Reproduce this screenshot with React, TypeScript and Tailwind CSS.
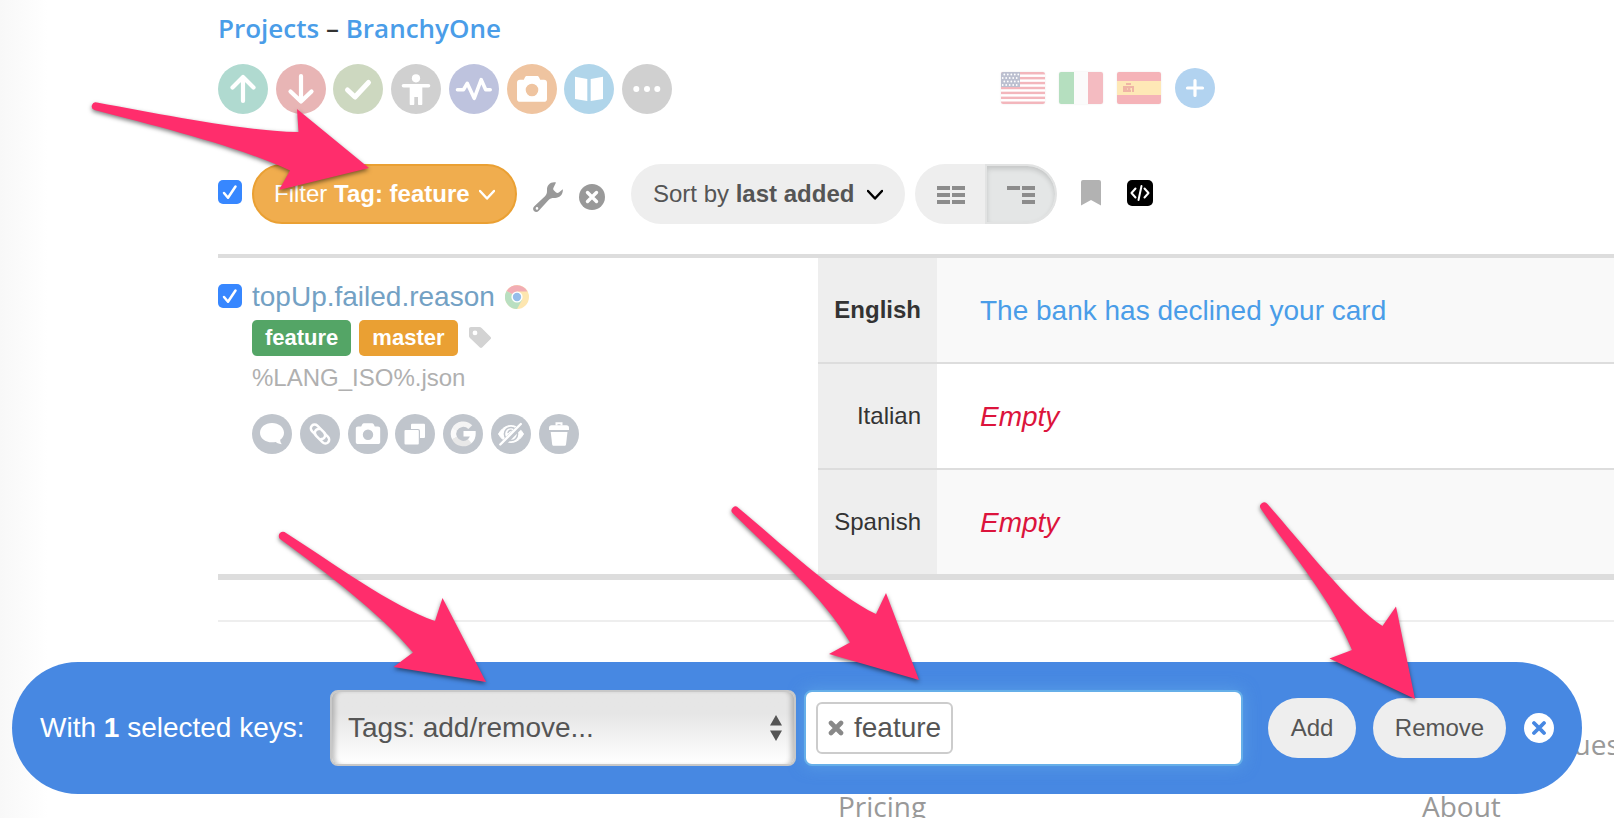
import type { ReactNode } from 'react';

const projectActions = [
  {
    label: 'Upload',
    bg: 'bg-[#b0dad0]',
    icon: <path d="M25 37V13M14.500 23.500 25 13l10.500 10.500" {...line(4.2)} />,
  },
  {
    label: 'Download',
    bg: 'bg-[#e8b5b5]',
    icon: <path d="M25 12v25M14.500 27.500 25 37.500l10.500-10" {...line(4.2)} />,
  },
  {
    label: 'Tasks',
    bg: 'bg-[#cdd8c0]',
    icon: <path d="m14.500 26 7.500 7 13.500-14.500" {...line(5)} />,
  },
  {
    label: 'Contributors',
    bg: 'bg-[#d0d0d0]',
    icon: (
      <>
        <circle cx="25" cy="14.300" r="4.100" fill="#fff" />
        <path d="M12.500 21.700h25" {...line(3.6)} />
        <path d="M18.700 20h12.600v20c0 .6-.4 1-1 1h-2.300c-.6 0-1-.4-1-1v-7h-3.700v7c0 .6-.4 1-1 1h-2.600c-.6 0-1-.4-1-1z" fill="#fff" />
      </>
    ),
  },
  {
    label: 'Activity',
    bg: 'bg-[#bec3de]',
    icon: <path d="M8.500 25.700h6l3.700-6.400 7 15 7-18.600 4.500 10h4.500" {...line(3.6)} />,
  },
  {
    label: 'Screenshots',
    bg: 'bg-[#efc4a0]',
    icon: (
      <path
        fillRule="evenodd"
        fill="#fff"
        d="M20 12h10c1 0 1.600.400 2 1.200l1.200 2.600H37c1.900 0 3 1.100 3 3V35c0 1.900-1.100 2.800-3 2.800H13c-1.900 0-3-.9-3-2.800V18.800c0-1.900 1.100-3 3-3h3.800l1.200-2.600c.4-.8 1-1.200 2-1.200zm5 7.700a6.300 6.300 0 1 0 0 12.600 6.300 6.300 0 0 0 0-12.600z"
      />
    ),
  },
  {
    label: 'Glossary',
    bg: 'bg-[#b0d5ea]',
    icon: <path d="m11 12.700 12.300 2.300v22L11 35zM39 12.700 26.700 15v22L39 35z" fill="#fff" />,
  },
  {
    label: 'More',
    bg: 'bg-[#d0d0d0]',
    icon: (
      <g fill="#fff">
        <circle cx="14.300" cy="25" r="3" />
        <circle cx="25" cy="25" r="3" />
        <circle cx="35.300" cy="25" r="3" />
      </g>
    ),
  },
];

const keyActions = [
  {
    label: 'Comments',
    icon: <path d="M20 9c6.900 0 12 4.300 12 9.700 0 3-1.500 5.400-3.800 7 0 1.800.5 3.300 1.700 4.500-2.200-.2-4.500-1-6.100-2.300-1.200.3-2.500.4-3.800.4-6.900 0-12-4.200-12-9.600S13.100 9 20 9z" fill="#fff" />,
  },
  {
    label: 'Attach',
    icon: (
      <g transform="rotate(45 20 20)" fill="none" stroke="#fff" strokeWidth="2.500" strokeLinecap="round">
        <path d="M17 23.600h-4.800a3.800 3.800 0 0 1 0-7.600h9.600a3.800 3.800 0 0 1 2.500 6.600" />
        <path d="M23 16.400h4.800a3.800 3.800 0 0 1 0 7.600h-9.600a3.800 3.800 0 0 1-2.500-6.600" />
      </g>
    ),
  },
  {
    label: 'Add screenshot',
    icon: (
      <path
        fillRule="evenodd"
        fill="#fff"
        d="M16 9.300h8c.8 0 1.300.3 1.700 1l1.100 2.200H30c1.400 0 2.200.8 2.200 2.200v13.200c0 1.400-.8 2.200-2.200 2.200H10c-1.400 0-2.200-.8-2.200-2.200V14.700c0-1.400.8-2.200 2.200-2.200h3.200l1.100-2.200c.4-.7.9-1 1.700-1zm4 6.200a5.200 5.200 0 1 0 0 10.400 5.200 5.200 0 0 0 0-10.400z"
      />
    ),
  },
  {
    label: 'Duplicate',
    icon: (
      <>
        <rect x="16" y="9.700" width="14" height="14.300" rx="1" fill="#fff" />
        <rect x="8.500" y="15" width="16.500" height="16.500" rx="2" fill="#c0c5cc" />
        <rect x="9.500" y="16" width="14.300" height="14.500" rx="1" fill="#fff" />
      </>
    ),
  },
  {
    label: 'Google',
    icon: (
      <g fill="none" strokeWidth="5.400">
        <path d="M27.300 13.200A9.800 9.800 0 0 0 11.500 15.500" stroke="#f4f4f4" />
        <path d="M11.600 15.300a9.800 9.800 0 0 0 0 9" stroke="#fafafa" />
        <path d="M11.500 24a9.800 9.800 0 0 0 15.500 3" stroke="#e8e8e8" />
        <path d="M20.500 19.800h9.500a9.800 9.800 0 0 1-3.200 7.400" stroke="#fff" />
      </g>
    ),
  },
  {
    label: 'Hide',
    icon: (
      <>
        <path d="M7.500 20c3-5.400 7.500-8.500 12.500-8.500s9.500 3.100 12.500 8.500c-3 5.400-7.500 8.500-12.500 8.500S10.500 25.400 7.500 20z" fill="#fff" stroke="#fff" strokeLinejoin="round" />
        <circle cx="20" cy="20" r="6.600" fill="none" stroke="#c0c5cc" strokeWidth="1.500" />
        <path d="M17 18.500c.6-1.500 1.800-2.200 3.200-2.200" fill="none" stroke="#c0c5cc" strokeWidth="1.400" strokeLinecap="round" />
        <path d="M31 10.500 10.800 31.200" stroke="#c0c5cc" strokeWidth="5.500" />
        <path d="M29.800 10 9.300 30.500" {...line(2.4)} />
      </>
    ),
  },
  {
    label: 'Delete',
    icon: (
      <>
        <path d="M17.500 11.500V9.300h5v2.200" fill="none" stroke="#fff" strokeWidth="2" />
        <path d="M12.500 11.300h15c1.500 0 2.500 1 2.500 2.500V16H10v-2.200c0-1.500 1-2.500 2.500-2.500z" fill="#fff" />
        <path d="M11.700 18h16.800L27 30.500c-.1.800-.7 1.300-1.500 1.300h-10.800c-.8 0-1.400-.5-1.500-1.300z" fill="#fff" />
      </>
    ),
  },
];

const translations = [
  { language: 'English', base: true, text: 'The bank has declined your card' },
  { language: 'Italian', base: false, text: null },
  { language: 'Spanish', base: false, text: null },
];

function line(width: number) {
  return {
    fill: 'none',
    stroke: '#fff',
    strokeWidth: width,
    strokeLinecap: 'round' as const,
    strokeLinejoin: 'round' as const,
  };
}

function Checkbox({ label }: { label: string }) {
  return (
    <label className="relative block size-6 shrink-0">
      <input
        type="checkbox"
        defaultChecked
        aria-label={label}
        className="peer block size-6 appearance-none rounded-[5px] border border-gray-400 bg-white checked:border-0 checked:bg-[#3787ff]"
      />
      <svg viewBox="0 0 24 24" className="pointer-events-none absolute inset-0 hidden size-6 peer-checked:block">
        <path d="m6 13 4 4.800L17.500 6.500" {...line(2.5)} />
      </svg>
    </label>
  );
}

function Chevron() {
  return (
    <svg viewBox="0 0 16 12" className="h-3 w-4" fill="none" stroke="currentColor" strokeWidth="2.500">
      <path d="m1 3 7 7.500L15 3" strokeLinecap="round" strokeLinejoin="round" />
    </svg>
  );
}

function Flags() {
  const flagClass = 'block h-8 w-11 rounded-xs shadow-[0_0_2px_#00000018]';

  return (
    <div className="flex items-center gap-3.5">
      <a href="#en" aria-label="English">
        <svg viewBox="0 0 44 32" className={flagClass}>
          <rect width="44" height="32" fill="#fff" />
          {[0, 1, 2, 3, 4, 5, 6].map((i) => (
            <rect key={i} y={i * 4.92} width="44" height="2.46" fill="#f3b6bc" />
          ))}
          <rect width="19" height="15" fill="#bcc0d0" />
          {[2.5, 6, 9.5, 13].map((y, row) =>
            [2.5, 6, 9.5, 13, 16.5].map((x) => (
              <circle key={`${x}-${y}`} cx={row % 2 ? x - 0.8 : x + 0.8} cy={y} r="0.900" fill="#fff" />
            ))
          )}
        </svg>
      </a>
      <a href="#it" aria-label="Italian">
        <svg viewBox="0 0 44 32" className={flagClass}>
          <rect width="15" height="32" fill="#b5dfbf" />
          <rect x="15" width="14" height="32" fill="#fbfbfb" />
          <rect x="29" width="15" height="32" fill="#f4bbc1" />
        </svg>
      </a>
      <a href="#es" aria-label="Spanish">
        <svg viewBox="0 0 44 32" className={flagClass}>
          <rect width="44" height="32" fill="#f5b3b8" />
          <rect y="9" width="44" height="14" fill="#fee8b6" />
          <path d="M6 14h2v6H6zM15 14h2v6h-2zM9 11h5v2H9zM8 14h7v2H8zM8 16h6v4H8z" fill="#efb5a5" />
          <path d="M10 16h1v2h-1zM13 16h1v2h-1z" fill="#f8d0b5" />
        </svg>
      </a>
      <button type="button" aria-label="Add language" className="size-10 rounded-full bg-[#b2d3f0]">
        <svg viewBox="0 0 40 40" className="size-10">
          <path d="M20 12.500v15M12.500 20h15" {...line(3.2)} />
        </svg>
      </button>
    </div>
  );
}

function WrenchIcon() {
  return (
    <svg viewBox="0 0 30 30" className="block size-[30px]" fill="currentColor">
      <path
        fillRule="evenodd"
        d="M23 .5C17.500-.7 13.800 3.500 14 8c.1 2.800-.3 4.600-2 6.300L1.300 24.200c-1.600 1.500-1.600 3.600-.3 4.900 1.300 1.200 3.400 1.200 4.800-.3L15.600 18c1.600-1.700 3.400-2.100 6.200-2 4.700.2 8.600-3.500 8-8.700l-4 3.200c-1 .700-2 .700-3-.2l-1.800-1.700c-1-1-1-1.900-.4-3zM4 25.100a1.300 1.300 0 1 0 0 2.600 1.300 1.300 0 0 0 0-2.600z"
      />
    </svg>
  );
}

function ChromeIcon() {
  return (
    <svg viewBox="0 0 24 24" className="size-6">
      <circle cx="12" cy="12" r="12" fill="#fde6b0" />
      <path d="M12 12 1.600 6A12 12 0 0 1 22.400 6.500L12 6.500z" fill="#f2adb4" />
      <path d="M12 12 1.600 6A12 12 0 0 0 12 24l5-9z" fill="#b9dfc1" />
      <circle cx="12" cy="12" r="5.600" fill="#fff" />
      <circle cx="12" cy="12" r="4.200" fill="#96bdea" />
    </svg>
  );
}

function Toolbar() {
  return (
    <div className="flex h-[60px] items-center text-2xl text-[#555]">
      <div className="mr-2.5 -mt-1">
        <Checkbox label="Select all keys" />
      </div>
      <button
        type="button"
        className="flex h-[60px] w-[265px] items-center justify-between rounded-full border-2 border-[#eaa033] bg-[#f0ad4e] px-5 text-white"
      >
        <span>
          Filter <b>Tag: feature</b>
        </span>
        <Chevron />
      </button>
      <button type="button" aria-label="Filter settings" className="mt-1.5 ml-4 text-[#999]">
        <WrenchIcon />
      </button>
      <button type="button" aria-label="Clear filter" className="mt-1.5 ml-4 size-[26px] rounded-full bg-[#999]">
        <svg viewBox="0 0 26 26" className="size-[26px]">
          <path d="m8.500 8.500 9 9M17.500 8.500l-9 9" {...line(3.4)} />
        </svg>
      </button>
      <button
        type="button"
        className="ml-[26px] flex h-[60px] w-[274px] items-center justify-between rounded-full bg-[#eee] px-[22px]"
      >
        <span>
          Sort by <b>last added</b>
        </span>
        <span className="text-black">
          <Chevron />
        </span>
      </button>
      <div className="ml-2.5 flex h-[60px] overflow-hidden rounded-full bg-[#eee]">
        <button type="button" aria-label="Multilingual view" className="w-[70px] pl-[22px]">
          <svg viewBox="0 0 28 18" className="mt-0.5 h-[18px] w-7" fill="#8c8c8c">
            <path d="M0 0h13v4H0zM15 0h13v4H15zM0 7h13v4H0zM15 7h13v4H15zM0 14h13v4H0zM15 14h13v4H15z" />
          </svg>
        </button>
        <button
          type="button"
          aria-label="Bilingual view"
          aria-pressed="true"
          className="w-[72px] rounded-r-full border-2 border-[#e2e3e3] bg-[#e4e6e6] pl-5 shadow-[inset_0_3px_5px_#00000024]"
        >
          <svg viewBox="0 0 28 18" className="mt-0.5 h-[18px] w-7" fill="#8c8c8c">
            <path d="M0 0h13v4H0zM15 0h13v4H15zM15 7h13v4H15zM15 14h13v4H15z" />
          </svg>
        </button>
      </div>
      <button type="button" aria-label="Bookmark" className="-mt-0.5 ml-6">
        <svg viewBox="0 0 20 26" className="block h-[26px] w-5" fill="#b2b2b2">
          <path d="M2 0h16a2 2 0 0 1 2 2v23.500L10 20 0 25.500V2a2 2 0 0 1 2-2z" />
        </svg>
      </button>
      <button type="button" aria-label="Code" className="-mt-0.5 ml-[26px] size-[26px] rounded-[5px] bg-black">
        <svg viewBox="0 0 26 26" className="size-[26px]">
          <path d="m8.500 8.500-4 4.500 4 4.500M17.500 8.500l4 4.500-4 4.500M14.500 6l-3 14" {...line(2)} />
        </svg>
      </button>
    </div>
  );
}

function KeyDetails() {
  return (
    <div className="flex items-start gap-2.5 pt-[26px]">
      <Checkbox label="Select topUp.failed.reason" />
      <div>
        <div className="flex h-[26px] items-center gap-2.5">
          <a href="#key" className="text-[28px] text-[#73a1c4]">
            topUp.failed.reason
          </a>
          <ChromeIcon />
        </div>
        <div className="mt-2.5 flex gap-2 text-[22px] leading-9 font-bold text-white">
          <span className="rounded-[5px] bg-[#54a566] px-[13px]">feature</span>
          <span className="rounded-[5px] bg-[#eaa033] px-[13px]">master</span>
          <button type="button" aria-label="Edit tags" className="ml-0.5">
            <svg viewBox="0 0 24 24" className="size-6" fill="#d3d3d3">
              <path
                fillRule="evenodd"
                d="M3 1h8.500c.8 0 1.500.3 2.100.9l9 9c.6.6.6 1.600 0 2.200l-8.500 8.500c-.6.6-1.600.6-2.200 0L2.500 12.500C1.800 11.800 1 10.800 1 10V3c0-1.200.8-2 2-2zm4 3.500a2.400 2.400 0 1 0 0 4.800 2.400 2.400 0 0 0 0-4.800z"
              />
            </svg>
          </button>
        </div>
        <div className="mt-1.5 text-2xl text-[#b0b0b0]">%LANG_ISO%.json</div>
        <div className="mt-5 flex w-[327px] justify-between">
          {keyActions.map((action) => (
            <button key={action.label} type="button" aria-label={action.label} className="size-10 rounded-full bg-[#c0c5cc]">
              <svg viewBox="0 0 40 40" className="size-10">
                {action.icon}
              </svg>
            </button>
          ))}
        </div>
      </div>
    </div>
  );
}

function KeysTable() {
  return (
    <table className="mt-[30px] w-full table-fixed border-separate border-spacing-0 border-t-4 border-b-6 border-[#ddd]">
      <tbody>
        {translations.map((item, i) => {
          const border = i < translations.length - 1 ? 'h-[106px] border-b-2 border-[#ddd]' : 'h-[104px]';
          return (
            <tr key={item.language}>
              {i === 0 && (
                <td rowSpan={3} className="w-[600px] p-0 align-top">
                  <KeyDetails />
                </td>
              )}
              <th
                scope="row"
                className={`${border} w-[119px] bg-[#eee] p-0 pr-4 text-right text-2xl text-[#333] ${item.base ? 'font-bold' : 'font-normal'}`}
              >
                {item.language}
              </th>
              <td className={`${border} p-0 pt-0.5 pl-[43px] text-[28px] ${i % 2 ? 'bg-white' : 'bg-[#f9f9f9]'}`}>
                <a href={`#${item.language}`} className={item.text ? 'text-[#4a9de8]' : 'text-[#dc143c] italic'}>
                  {item.text ?? 'Empty'}
                </a>
              </td>
            </tr>
          );
        })}
      </tbody>
    </table>
  );
}

function BulkActions() {
  return (
    <form className="fixed right-8 bottom-6 left-3 z-10 flex h-[132px] items-center rounded-full bg-[#4788e2] px-7 text-[28px] text-white">
      <label htmlFor="bulk-action" className="w-[290px] shrink-0">
        With <b>1</b> selected keys:
      </label>
      <div className="relative w-[466px] shrink-0">
        <select
          id="bulk-action"
          className="block h-[76px] w-full appearance-none rounded-lg border-2 border-[#c8c8c8] bg-linear-to-b from-[#e6e6e6] from-30% to-white pl-4 text-[#555] shadow-[inset_6px_0_5px_-3px_#0000003a,inset_-6px_0_5px_-3px_#0000003a]"
        >
          <option>Tags: add/remove...</option>
        </select>
        <svg viewBox="0 0 12 26" className="pointer-events-none absolute top-[25px] right-3.5 h-[26px] w-3" fill="#555">
          <path d="M6 0l6 10.500H0zM6 26l6-10.500H0z" />
        </svg>
      </div>
      <div className="ml-2 flex h-[76px] min-w-0 flex-1 items-center rounded-lg border-2 border-[#66afe9] bg-white pl-2.5 text-[#555] shadow-[0_0_16px_#66afe999]">
        <span className="flex h-[52px] shrink-0 items-center gap-2.5 rounded-md border-2 border-[#ccc] px-2.5">
          <button type="button" aria-label="Remove feature" className="block">
            <svg viewBox="0 0 16 16" className="block size-4">
              <path d="m3 3 10 10M13 3 3 13" stroke="#888" strokeWidth="4.600" strokeLinecap="round" />
            </svg>
          </button>
          feature
        </span>
        <input type="text" aria-label="Tags" className="h-12 min-w-0 flex-1 px-3 outline-none" />
      </div>
      <Pill className="ml-[25px] w-[88px]">Add</Pill>
      <Pill className="ml-[17px] w-[133px]">Remove</Pill>
      <button type="button" aria-label="Close" className="ml-[18px] size-[30px] shrink-0 rounded-full bg-white">
        <svg viewBox="0 0 30 30" className="size-[30px]">
          <path d="m10 10 10 10M20 10 10 20" stroke="#4788e2" strokeWidth="3.800" strokeLinecap="round" />
        </svg>
      </button>
    </form>
  );
}

function Pill({ className, children }: { className: string; children: ReactNode }) {
  return (
    <button type="button" className={`${className} h-[60px] shrink-0 rounded-full bg-[#eee] text-2xl text-[#555]`}>
      {children}
    </button>
  );
}

function Pointer({ className, viewBox, d }: { className: string; viewBox: string; d: string }) {
  return (
    <svg
      viewBox={viewBox}
      className={`${className} pointer-events-none absolute z-20 overflow-visible drop-shadow-[0_2px_2px_#00000080]`}
      fill="#ff2d6c"
      aria-hidden="true"
    >
      <path d={d} />
    </svg>
  );
}

export default function App() {
  return (
    <div className="relative h-screen overflow-hidden bg-linear-to-r from-[#f8f8f8] to-white to-[48px] font-['Liberation_Sans',Arial,sans-serif]">
      <main className="pt-3 pl-[218px]">
        <h1 className="font-['Open_Sans',sans-serif] text-[26px] leading-8 font-semibold text-[#333]">
          <a href="#projects" className="text-[#4a9de8]">
            Projects
          </a>{' '}
          –{' '}
          <a href="#branchyone" className="text-[#4a9de8]">
            BranchyOne
          </a>
        </h1>

        <div className="mt-5 mb-[50px] flex items-center">
          <div className="flex w-[454px] justify-between">
            {projectActions.map((action) => (
              <button key={action.label} type="button" aria-label={action.label} className={`${action.bg} size-[50px] rounded-full`}>
                <svg viewBox="0 0 50 50" className="size-[50px]">
                  {action.icon}
                </svg>
              </button>
            ))}
          </div>
          <div className="-mt-0.5 ml-[329px]">
            <Flags />
          </div>
        </div>

        <Toolbar />
        <KeysTable />
        <hr className="mt-10 border-t-2 border-[#eee]" />
      </main>

      <footer className="flex items-end pt-[91px] pl-[838px] font-['Open_Sans',sans-serif] text-[28px] leading-[62px] text-[#999]">
        <a href="#pricing" className="w-[584px] shrink-0">
          Pricing
        </a>
        <div className="shrink-0">
          <a href="#requests" className="block whitespace-nowrap">
            Feature requests
          </a>
          <a href="#about" className="block">
            About
          </a>
        </div>
      </footer>

      <BulkActions />

      <Pointer
        className="top-[100px] left-[90px] h-[92px] w-[280px]"
        viewBox="90 100 280 92"
        d="M97 102.500C165 115 245 131 298.500 132L297 109l72 59-90 22 11-19.500C240 147 160 127 94.500 110a3.800 3.800 0 0 1 2.500-7.500z"
      />
      <Pointer
        className="top-[530px] left-[276px] h-[154px] w-[212px]"
        viewBox="276 530 212 154"
        d="M286 533C330 561 393 607 435 621l7.500-23L486 682l-92.500-15 19.500-14.500C379 612 325 572 280 539a3.800 3.800 0 0 1 6-6z"
      />
      <Pointer
        className="top-[504px] left-[730px] h-[178px] w-[190px]"
        viewBox="730 504 190 178"
        d="M738.500 508C777 540 837 596 876 614l10-21 33 87-90-26 21-11.500C824 597 773 553 732.500 513a3.800 3.800 0 0 1 6-5z"
      />
      <Pointer
        className="top-[500px] left-[1258px] h-[200px] w-[158px]"
        viewBox="1258 500 158 200"
        d="M1267.500 504C1301 542 1351 606 1382.500 626l13.500-19.500 19 92.500-85.500-40.500 22.500-8.500C1331 599 1294 557 1261 509a3.800 3.800 0 0 1 6.500-5z"
      />
    </div>
  );
}
